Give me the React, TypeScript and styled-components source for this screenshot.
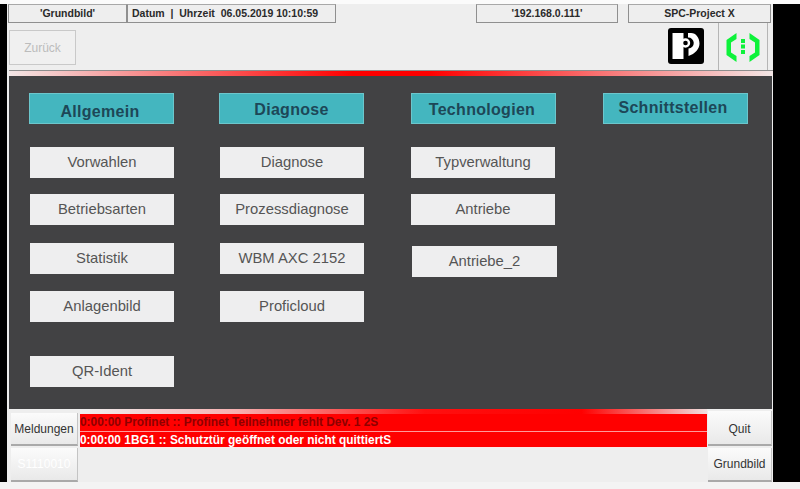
import React from "react";
import styled, { createGlobalStyle } from "styled-components";

const Global = createGlobalStyle`
  html, body { margin: 0; padding: 0; background: #f3f3f3; }
  body { width: 800px; height: 489px; overflow: hidden; font-family: "Liberation Sans", Arial, sans-serif; }
`;

const Page = styled.div`
  width: 800px;
  height: 489px;
  display: grid;
  grid-template-rows: 4px 478px 7px;
  grid-template-columns: 7px 766px 27px;
  background: #f4f4f4;
`;
const TopStrip = styled.div`
  grid-column: 1 / 4;
  background: #fbfbfb;
`;
const SideBar = styled.div`
  background: #000;
`;
const BottomStrip = styled.div`
  grid-column: 1 / 4;
  background: #f3f3f3;
`;
const Main = styled.main`
  display: flex;
  flex-direction: column;
  background: #eeeeee;
  min-height: 0;
`;

const TopBar = styled.div`
  height: 19px;
  display: flex;
  padding-left: 1px;
`;
const Cell = styled.div<{ $w: number; $ml?: number }>`
  width: ${(p) => p.$w}px;
  margin-left: ${(p) => p.$ml ?? 0}px;
  height: 19px;
  box-sizing: border-box;
  border: 1px solid #8f8f8f;
  border-top-color: #a8a8a8;
  font-size: 10.5px;
  font-weight: bold;
  line-height: 17px;
  color: #2a2a2a;
  text-align: ${(p) => (p.$w > 200 ? "left" : "center")};
  padding-left: ${(p) => (p.$w > 200 ? 4 : 0)}px;
  white-space: pre;
`;

const Header = styled.div`
  height: 47px;
  display: flex;
  align-items: stretch;
  padding-left: 2px;
`;
const BackButton = styled.button`
  width: 67px;
  height: 35px;
  margin-top: 7px;
  box-sizing: border-box;
  border: 1px solid #c9c9c9;
  background: #f0f0f0;
  color: #bcbcbc;
  font: 12px "Liberation Sans", Arial, sans-serif;
  padding: 0;
`;
const Logo = styled.svg`
  width: 36px;
  height: 36px;
  margin: 5px 0 0 592px;
`;
const StatusCell = styled.div`
  width: 50px;
  margin-left: 14px;
  box-sizing: border-box;
  border-left: 1px solid #b5b5b5;
  border-right: 1px solid #b5b5b5;
  display: flex;
  align-items: center;
  justify-content: center;
`;

const Rule = styled.div`
  height: 6px;
  margin-left: 2px;
  box-sizing: border-box;
  border-top: 1px solid #8d8d8d;
  background: linear-gradient(90deg, #f3e6e6 0%, #ff0000 45%, #ff0000 55%, #f3e6e6 100%);
`;

const Panel = styled.section`
  height: 333px;
  margin-left: 2px;
  margin-right: 1px;
  box-sizing: border-box;
  background: #424244;
  padding: 17px 0 0 20px;
  display: grid;
  grid-template-columns: 190px 192px 192px 145px;
  align-items: start;
`;
const Column = styled.div`
  display: flex;
  flex-direction: column;
`;
const Title = styled.div<{ $shift: number; $inset: number }>`
  width: 145px;
  height: 31px;
  box-sizing: border-box;
  background: #44b6bf;
  border: 1px solid #6cc6cc;
  color: #1d4757;
  font-size: 16px;
  font-weight: bold;
  letter-spacing: 0.3px;
  text-align: center;
  line-height: ${(p) => 29 + 2 * p.$shift}px;
  padding-right: ${(p) => p.$inset}px;
  margin-bottom: 23px;
`;
const MenuButton = styled.button<{ $top?: number; $left?: number; $w?: number }>`
  width: ${(p) => p.$w ?? 144}px;
  height: 31px;
  margin-top: ${(p) => p.$top ?? 0}px;
  margin-left: ${(p) => p.$left ?? 1}px;
  box-sizing: border-box;
  border: none;
  background: #eeeeef;
  color: #555;
  font: 14.8px "Liberation Sans", Arial, sans-serif;
  padding: 0 0 1px;
`;

const Footer = styled.div`
  height: 73px;
  display: flex;
  background: #eeeeee;
`;
const SideStack = styled.div<{ $w: number; $ml: number; $top: number }>`
  width: ${(p) => p.$w}px;
  margin-left: ${(p) => p.$ml}px;
  padding-top: ${(p) => p.$top}px;
  display: flex;
  flex-direction: column;
  gap: 2px;
  flex: none;
`;
const FootButton = styled.button<{ $h: number; $ghost?: boolean; $dy?: number }>`
  height: ${(p) => p.$h}px;
  box-sizing: border-box;
  border: none;
  border-bottom: 2px solid #a9a9a9;
  border-right: 1px solid #c4c4c4;
  background: linear-gradient(#fbfbfb, #e9e9e9);
  color: ${(p) => (p.$ghost ? "#ffffff" : "#333")};
  font: 12px "Liberation Sans", Arial, sans-serif;
  padding: ${(p) => p.$dy ?? 0}px 0 0;
`;
const Messages = styled.div`
  width: 627px;
  margin-left: 2px;
  display: flex;
  flex-direction: column;
`;
const FootRule = styled.div`
  height: 5px;
  background: linear-gradient(90deg, #eeeeee 0%, #f7b0b0 25%, #ff1010 55%, #ff0000 80%, #f0e0e0 100%);
`;
const Message = styled.div<{ $light?: boolean; $h: number }>`
  height: ${(p) => p.$h}px;
  background: #ff0000;
  border-bottom: 1px solid ${(p) => (p.$light ? "#fde8e8" : "#ff9a9a")};
  box-sizing: border-box;
  color: ${(p) => (p.$light ? "#ffffff" : "#8e0000")};
  font-size: 11.9px;
  font-weight: bold;
  line-height: 16px;
  white-space: pre;
`;

const columns: {
  title: string;
  shift: number;
  inset: number;
  items: { label: string; top?: number; left?: number; w?: number }[];
}[] = [
  {
    title: "Allgemein",
    shift: 3,
    inset: 3,
    items: [
      { label: "Vorwahlen" },
      { label: "Betriebsarten", top: 16 },
      { label: "Statistik", top: 18 },
      { label: "Anlagenbild", top: 17 },
      { label: "QR-Ident", top: 34 },
    ],
  },
  {
    title: "Diagnose",
    shift: 1,
    inset: 0,
    items: [
      { label: "Diagnose" },
      { label: "Prozessdiagnose", top: 16 },
      { label: "WBM AXC 2152", top: 18 },
      { label: "Proficloud", top: 17 },
    ],
  },
  {
    title: "Technologien",
    shift: 1,
    inset: 3,
    items: [
      { label: "Typverwaltung", left: 0 },
      { label: "Antriebe", top: 16, left: 0 },
      { label: "Antriebe_2", top: 21, left: 1, w: 145 },
    ],
  },
  { title: "Schnittstellen", shift: -1, inset: 5, items: [] },
];

export default function App() {
  return (
    <>
      <Global />
      <Page>
        <TopStrip />
        <SideBar />
        <Main>
          <TopBar>
            <Cell $w={119}>'Grundbild'</Cell>
            <Cell $w={209}>{"Datum  |  Uhrzeit  06.05.2019 10:10:59"}</Cell>
            <Cell $w={142} $ml={140}>'192.168.0.111'</Cell>
            <Cell $w={143} $ml={10}>SPC-Project X</Cell>
          </TopBar>
          <Header>
            <BackButton>Zurück</BackButton>
            <Logo viewBox="0 0 36 36">
              <rect width="36" height="36" rx="3" fill="#000" />
              <path d="M4.500 5H15.500V31H4.500Z" fill="#fff" />
              <path d="M20 5H23C28 5 31.500 10 31.500 15.500C31.500 21 27 26 20.500 28V20.500A5.500 5.500 0 0 0 20 9.500Z" fill="#fff" />
              <circle cx="17.500" cy="15" r="3.500" fill="#000" stroke="#fff" strokeWidth="2.400" />
            </Logo>
            <StatusCell>
              <svg width="34" height="34" viewBox="0 0 34 34">
                <path d="M10.500 3 0.500 10V25L10.500 32V26L5 22.500V12.500L10.500 9Z" fill="#0df23a" />
                <path d="M23.500 3 33.500 10V25L23.500 32V26L29 22.500V12.500L23.500 9Z" fill="#0df23a" />
                <rect x="15" y="9" width="4" height="4" fill="#0df23a" />
                <rect x="15" y="14.500" width="4" height="4" fill="#0df23a" />
                <rect x="15" y="20" width="4" height="4" fill="#0df23a" />
              </svg>
            </StatusCell>
          </Header>
          <Rule />
          <Panel>
            {columns.map((c) => (
              <Column key={c.title}>
                <Title $shift={c.shift} $inset={c.inset}>{c.title}</Title>
                {c.items.map((i) => (
                  <MenuButton key={i.label} $top={i.top} $left={i.left} $w={i.w}>
                    {i.label}
                  </MenuButton>
                ))}
              </Column>
            ))}
          </Panel>
          <Footer>
            <SideStack $w={67} $ml={4} $top={4}>
              <FootButton $h={33} $dy={1}>Meldungen</FootButton>
              <FootButton $h={34} $ghost>S1110010</FootButton>
            </SideStack>
            <Messages>
              <FootRule />
              <Message $h={18}>0:00:00 Profinet :: Profinet Teilnehmer fehlt Dev. 1 2S</Message>
              <Message $h={16} $light>0:00:00 1BG1 :: Schutztür geöffnet oder nicht quittiertS</Message>
            </Messages>
            <SideStack $w={64} $ml={1} $top={2}>
              <FootButton $h={35} $dy={2}>Quit</FootButton>
              <FootButton $h={34}>Grundbild</FootButton>
            </SideStack>
          </Footer>
        </Main>
        <SideBar />
        <BottomStrip />
      </Page>
    </>
  );
}
